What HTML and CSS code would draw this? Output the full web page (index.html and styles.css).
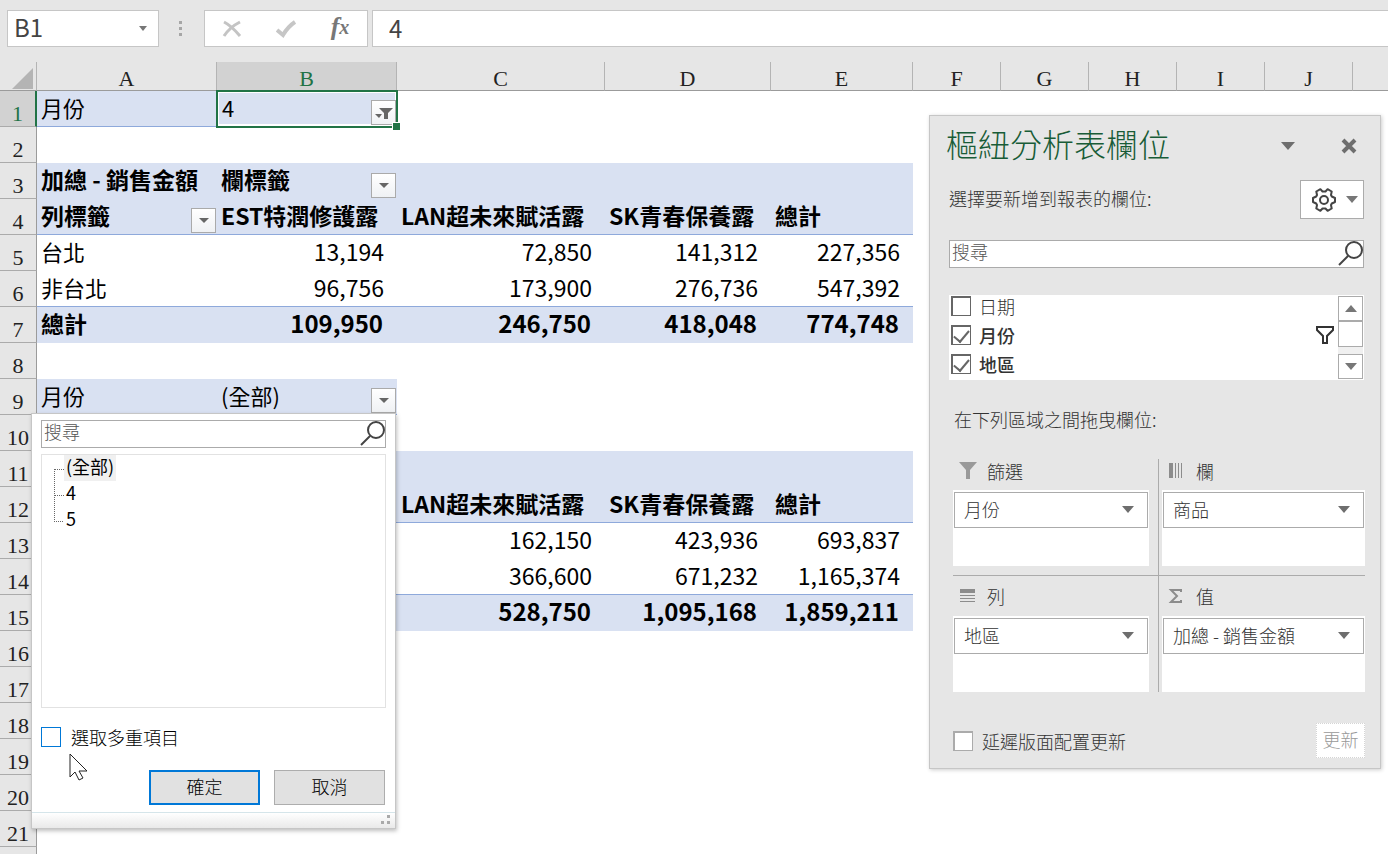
FILE: index.html
```html
<!DOCTYPE html>
<html lang="zh-Hant">
<head>
    <meta charset="UTF-8">
    <meta name="viewport" content="width=device-width, initial-scale=1.0">
    <title>樞紐分析表</title>
    <link rel="stylesheet" href="styles.css">
</head>
<body>
<header class="formula-bar">
    <div class="name-box">
        <input type="text" value="B1" aria-label="名稱方塊">
        <button type="button" aria-label="名稱清單"><svg width="8" height="5"><path d="M0 0h8L4 5z" fill="#777"/></svg></button>
    </div>
    <svg class="grip" width="3" height="16"><path d="M0 0h3v3H0zM0 6h3v3H0zM0 12h3v3H0z" fill="#a6a6a6"/></svg>
    <div class="formula-tools">
        <button type="button" aria-label="取消輸入"><svg width="20" height="20" viewBox="0 0 20 20"><path d="M2 3C8 6 13 11 18 17M18 3C12 6 6 11 2 17" fill="none" stroke="#c4c4c4" stroke-width="3"/></svg></button>
        <button type="button" aria-label="輸入"><svg width="20" height="20" viewBox="0 0 20 20"><path d="M1 11l6 5C10 11 13 7 19 3" fill="none" stroke="#c6c6c6" stroke-width="4"/></svg></button>
        <button type="button" class="fx" aria-label="插入函數"><span>f</span>x</button>
    </div>
    <input class="formula-input" type="text" value="4" aria-label="資料編輯列">
</header>

<main class="sheet">
    <table class="grid">
        <colgroup>
            <col class="col-head"><col class="col-a"><col class="col-a"><col class="col-c"><col class="col-d"><col class="col-e">
            <col class="col-f"><col class="col-f"><col class="col-f"><col class="col-f"><col class="col-f"><col>
        </colgroup>
        <thead>
            <tr>
                <th class="corner"><svg width="21" height="21"><path d="M21 0v21H0z" fill="#b4b4b4"/></svg></th>
                <th>A</th><th class="active">B</th><th>C</th><th>D</th><th>E</th><th>F</th><th>G</th><th>H</th><th>I</th><th>J</th><th></th>
            </tr>
        </thead>
        <tbody>
            <tr>
                <th class="active">1</th>
                <td class="fill line">月份</td>
                <td class="fill line selected">4<button type="button" class="drop" aria-label="篩選 月份"><svg width="18" height="12"><path d="M4 1h14l-5 5v6H9V6zM0 7h7l-3 4z" fill="#666"/></svg></button><span class="handle"></span></td>
            </tr>
            <tr><th>2</th></tr>
            <tr class="bold">
                <th>3</th>
                <td class="fill">加總 - 銷售金額</td>
                <td class="fill">欄標籤<button type="button" class="drop" aria-label="篩選 欄標籤"><svg width="10" height="5"><path d="M0 0h10L5 5z" fill="#666"/></svg></button></td>
                <td class="fill"></td><td class="fill"></td><td class="fill"></td>
            </tr>
            <tr class="bold">
                <th>4</th>
                <td class="fill line">列標籤<button type="button" class="drop" aria-label="篩選 列標籤"><svg width="10" height="5"><path d="M0 0h10L5 5z" fill="#666"/></svg></button></td>
                <td class="fill line">EST特潤修護露</td>
                <td class="fill line">LAN超未來賦活露</td>
                <td class="fill line">SK青春保養露</td>
                <td class="fill line">總計</td>
            </tr>
            <tr><th>5</th><td>台北</td><td class="num">13,194</td><td class="num">72,850</td><td class="num">141,312</td><td class="num">227,356</td></tr>
            <tr><th>6</th><td class="line">非台北</td><td class="num line">96,756</td><td class="num line">173,900</td><td class="num line">276,736</td><td class="num line">547,392</td></tr>
            <tr class="bold"><th>7</th><td class="fill">總計</td><td class="fill num">109,950</td><td class="fill num">246,750</td><td class="fill num">418,048</td><td class="fill num">774,748</td></tr>
            <tr><th>8</th></tr>
            <tr>
                <th>9</th>
                <td class="fill line">月份</td>
                <td class="fill line">(全部)<button type="button" class="drop" aria-label="篩選 月份"><svg width="10" height="5"><path d="M0 0h10L5 5z" fill="#666"/></svg></button></td>
            </tr>
            <tr><th>10</th></tr>
            <tr class="bold"><th>11</th><td class="fill"></td><td class="fill"></td><td class="fill"></td><td class="fill"></td><td class="fill"></td></tr>
            <tr class="bold"><th>12</th><td class="fill line"></td><td class="fill line"></td><td class="fill line">LAN超未來賦活露</td><td class="fill line">SK青春保養露</td><td class="fill line">總計</td></tr>
            <tr><th>13</th><td></td><td></td><td class="num">162,150</td><td class="num">423,936</td><td class="num">693,837</td></tr>
            <tr><th>14</th><td class="line"></td><td class="line"></td><td class="num line">366,600</td><td class="num line">671,232</td><td class="num line">1,165,374</td></tr>
            <tr class="bold"><th>15</th><td class="fill"></td><td class="fill"></td><td class="fill num">528,750</td><td class="fill num">1,095,168</td><td class="fill num">1,859,211</td></tr>
            <tr><th>16</th></tr>
            <tr><th>17</th></tr>
            <tr><th>18</th></tr>
            <tr><th>19</th></tr>
            <tr><th>20</th></tr>
            <tr><th>21</th></tr>
            <tr><th></th></tr>
        </tbody>
    </table>
</main>

<!-- Filter menu of the second report -->
<form class="filter-menu">
    <div class="search">
        <input type="text" placeholder="搜尋" aria-label="搜尋項目">
        <svg width="25" height="26" viewBox="0 0 25 26"><circle cx="16" cy="9" r="8" fill="none" stroke="#444" stroke-width="2"/><path d="M10 15L1 24" stroke="#444" stroke-width="2"/></svg>
    </div>
    <ul class="tree">
        <li><span class="current">(全部)</span></li>
        <li><span>4</span></li>
        <li><span>5</span></li>
    </ul>
    <label class="multi"><input type="checkbox">選取多重項目</label>
    <div class="actions">
        <button type="button" class="primary">確定</button>
        <button type="button">取消</button>
    </div>
    <div class="resize"><svg width="10" height="10"><path d="M6 0h3v3H6zM0 6h3v3H0zM6 6h3v3H6z" fill="#aaa"/></svg></div>
</form>
<svg class="pointer" width="19" height="29" viewBox="0 0 19 29"><path d="M1 1v23l5-5 4 8 4-2-4-7h8z" fill="#fff" stroke="#222"/></svg>

<!-- PivotTable fields pane -->
<aside class="pane">
    <div class="pane-title">
        <h1>樞紐分析表欄位</h1>
        <button type="button" aria-label="工作窗格選項"><svg width="14" height="8"><path d="M0 0h14L7 8z" fill="#6e6e6e"/></svg></button>
        <button type="button" aria-label="關閉"><svg width="16" height="16"><path d="M2 2l12 12M14 2L2 14" stroke="#6e6e6e" stroke-width="4"/></svg></button>
    </div>
    <div class="pane-prompt">
        <span>選擇要新增到報表的欄位:</span>
        <button type="button" class="gear" aria-label="工具">
            <svg width="26" height="24" viewBox="0 0 26 24"><path d="M24 10v4l-3.200 1.500-.8 1.500.7 3.500-4.100 2.300-2.100-2.300h-3l-2.100 2.300-4.100-2.300L6 17l-.8-1.500L2 14v-4l3.200-1.500L6 7l-.7-3.500 4.100-2.300 2.100 2.300h3l2.100-2.300 4.100 2.300L20 7l.8 1.500z" fill="none" stroke="#444" stroke-width="2" stroke-linejoin="round"/><circle cx="13" cy="12" r="4" fill="none" stroke="#444" stroke-width="2"/></svg>
            <svg width="12" height="7"><path d="M0 0h12L6 7z" fill="#777"/></svg>
        </button>
    </div>
    <div class="search">
        <input type="text" placeholder="搜尋" aria-label="搜尋欄位">
        <svg width="25" height="26" viewBox="0 0 25 26"><circle cx="16" cy="9" r="8" fill="none" stroke="#444" stroke-width="2"/><path d="M10 15L1 24" stroke="#444" stroke-width="2"/></svg>
    </div>
    <div class="fields">
        <div class="field-list">
            <label><input type="checkbox">日期</label>
            <label class="used"><input type="checkbox" checked>月份<svg width="20" height="20" viewBox="0 0 20 20"><path d="M2 2h16v3l-6 6v7H8v-7L2 5z" fill="none" stroke="#333" stroke-width="2"/></svg></label>
            <label class="used"><input type="checkbox" checked>地區</label>
        </div>
        <div class="scroll">
            <button type="button" aria-label="向上"><svg width="12" height="7"><path d="M0 7h12L6 0z" fill="#777"/></svg></button>
            <div class="thumb"></div>
            <button type="button" aria-label="向下"><svg width="12" height="7"><path d="M0 0h12L6 7z" fill="#777"/></svg></button>
        </div>
    </div>
    <p class="zones-label">在下列區域之間拖曳欄位:</p>
    <div class="zones">
        <section class="zone">
            <h2><svg width="20" height="18"><path d="M0 0h18l-7 8v9H7V8z" fill="#999"/></svg>篩選</h2>
            <div class="drop-box"><button type="button">月份<svg width="12" height="7"><path d="M0 0h12L6 7z" fill="#6e6e6e"/></svg></button></div>
        </section>
        <section class="zone">
            <h2><svg width="20" height="18"><path d="M1 1h4v15H1zM7 1h1v15H7zM10 1h1v15h-1zM13 1h1v15h-1z" fill="#8c8c8c"/></svg>欄</h2>
            <div class="drop-box"><button type="button">商品<svg width="12" height="7"><path d="M0 0h12L6 7z" fill="#6e6e6e"/></svg></button></div>
        </section>
        <section class="zone">
            <h2><svg width="20" height="18"><path d="M1 2h15v4H1zM1 8h15v1H1zM1 11h15v1H1zM1 14h15v1H1z" fill="#8c8c8c"/></svg>列</h2>
            <div class="drop-box"><button type="button">地區<svg width="12" height="7"><path d="M0 0h12L6 7z" fill="#6e6e6e"/></svg></button></div>
        </section>
        <section class="zone">
            <h2><svg width="20" height="18"><path d="M13 5V3H3l6 6-6 6h10v-2" fill="none" stroke="#8c8c8c" stroke-width="2"/></svg>值</h2>
            <div class="drop-box"><button type="button">加總 - 銷售金額<svg width="12" height="7"><path d="M0 0h12L6 7z" fill="#6e6e6e"/></svg></button></div>
        </section>
    </div>
    <div class="pane-footer">
        <label><input type="checkbox">延遲版面配置更新</label>
        <button type="button" disabled>更新</button>
    </div>
</aside>
</body>
</html>
```
FILE: styles.css
```css
* {
    box-sizing: border-box;
}
body {
    margin: 0;
    height: 100vh;
    overflow: hidden;
    position: relative;
    background: white;
    color: #000;
    font-family: "Noto Sans CJK TC", sans-serif;
    font-size: 18px;
    line-height: 26px;
}
button,
input {
    font: inherit;
    color: inherit;
    margin: 0;
    padding: 0;
}
button {
    display: flex;
    align-items: center;
    justify-content: center;
    border: none;
    background: none;
    cursor: pointer;
}
svg {
    display: block;
    flex: none;
}

/* formula bar */
.formula-bar {
    display: flex;
    align-items: center;
    height: 62px;
    padding: 10px 0 15px 7px;
    background: #e6e6e6;
    color: #444;
    font-size: 24px;
}
.name-box,
.formula-tools,
.formula-input {
    height: 37px;
    background: white;
    border: 1px solid #c6c6c6;
}
.name-box {
    display: flex;
    width: 152px;
}
.name-box input,
.formula-input {
    min-width: 0;
    padding-bottom: 3px;
}
.name-box input {
    flex: 1;
    padding-left: 6px;
    border: none;
}
.name-box button {
    width: 30px;
}
.grip {
    margin: 0 22px 0 20px;
}
.formula-tools {
    display: flex;
    width: 164px;
    margin-right: 4px;
}
.formula-tools button {
    flex: 1;
}
.formula-tools .fx {
    padding-bottom: 4px;
    font-family: "Liberation Serif", serif;
    font-style: italic;
    font-weight: bold;
    font-size: 20px;
    color: #777;
}
.fx span {
    font-size: 26px;
}
.formula-input {
    flex: 1;
    padding-left: 16px;
    border-right: none;
}

/* sheet */
.grid {
    width: 100%;
    table-layout: fixed;
    border-collapse: separate;
    border-spacing: 0;
    font-size: 22px;
    line-height: 30px;
}
.col-head { width: 37px; }
.col-a { width: 180px; }
.col-c { width: 208px; }
.col-d { width: 166px; }
.col-e { width: 142px; }
.col-f { width: 88px; }
.grid tr {
    height: 36px;
}
.grid th {
    padding: 0;
    background: #e6e6e6;
    color: #222;
    font-family: "Liberation Serif", serif;
    font-weight: normal;
    border-right: 1px solid #9b9b9b;
    border-bottom: 1px solid #ababab;
}
.grid thead tr {
    height: 29px;
}
.grid thead th {
    padding-top: 5px;
    line-height: 23px;
    border-right-color: #b4b4b4;
    border-bottom-color: #9b9b9b;
}
.grid thead th:last-child {
    border-right: none;
}
.grid tbody th {
    padding-top: 11px;
    line-height: 24px;
}
.grid thead .active,
.grid tbody .active {
    background: #d2d2d2;
    color: #217346;
}
.grid tbody .active {
    border-right: 2px solid #217346;
}
.corner svg {
    margin-left: 12px;
}
.grid td {
    position: relative;
    padding: 0 0 5px 4px;
    white-space: nowrap;
}
.grid .line {
    padding-bottom: 4px;
    border-bottom: 1px solid #8ea9db;
}
.grid .num {
    padding-left: 0;
    padding-right: 13px;
    font-size: 23px;
    text-align: right;
}
.fill {
    background: #d9e1f2;
}
.grid .bold td {
    font-size: 23px;
    font-weight: bold;
}
.grid .bold .num {
    padding-right: 14px;
    font-size: 24px;
}
.grid .selected {
    padding-left: 5px;
    outline: 2px solid #217346;
    outline-offset: -1px;
    box-shadow: inset 0 0 0 2px white;
    z-index: 1;
}
.drop {
    position: absolute;
    right: 1px;
    bottom: 1px;
    width: 25px;
    height: 25px;
    border: 1px solid #aaa;
    background: linear-gradient(white, #eff1f4);
}
.handle {
    position: absolute;
    right: -3px;
    bottom: -4px;
    width: 8px;
    height: 8px;
    background: #217346;
    border-top: 1px solid white;
    border-left: 1px solid white;
}

/* shared search box */
.search {
    display: flex;
    height: 28px;
    border: 1px solid #ababab;
    background: white;
}
.search input {
    flex: 1;
    min-width: 0;
    padding-left: 2px;
    padding-bottom: 6px;
    border: none;
    background: none;
    font-weight: 300;
}
.search input::placeholder {
    color: #555;
    opacity: 1;
}

/* check boxes */
input[type="checkbox"] {
    appearance: none;
    flex: none;
    width: 20px;
    height: 20px;
    border: 2px solid #666;
    border-width: 2px 1px 1px 2px;
    background: white;
}
input[type="checkbox"]:checked {
    display: grid;
    place-items: center;
}
input[type="checkbox"]:checked::after {
    content: "";
    width: 7px;
    height: 13px;
    margin-bottom: 4px;
    border: solid #666;
    border-width: 0 2px 2px 0;
    transform: rotate(40deg);
}

/* filter menu */
.filter-menu {
    position: absolute;
    left: 31px;
    top: 413px;
    width: 365px;
    padding: 6px 9px 0;
    background: white;
    border: 1px solid #c6c6c6;
    box-shadow: 1px 2px 4px rgba(0, 0, 0, 0.25);
    z-index: 2;
}
.tree {
    height: 254px;
    margin: 6px 0 19px;
    padding: 0 0 0 13px;
    border: 1px solid #e2e2e2;
    list-style: none;
}
.tree li {
    position: relative;
    height: 26px;
    padding-left: 9px;
}
.tree li::before {
    content: "";
    position: absolute;
    left: -1px;
    top: 14px;
    width: 9px;
    height: 26px;
    border-top: 1px dotted #666;
    border-left: 1px dotted #666;
}
.tree li:last-child::before {
    border-left: none;
}
.tree span {
    display: block;
    width: fit-content;
    height: 26px;
    padding: 0 2px;
    line-height: 22px;
}
.tree .current {
    background: #f0f0f0;
}
.multi {
    display: flex;
    align-items: center;
    gap: 10px;
    height: 20px;
    font-weight: 300;
}
.multi input[type="checkbox"] {
    border: 1px solid #0078d7;
}
.actions {
    display: flex;
    justify-content: flex-end;
    gap: 14px;
    margin: 23px 1px 7px;
}
.actions button {
    width: 111px;
    height: 35px;
    padding-bottom: 3px;
    background: #e1e1e1;
    border: 1px solid #adadad;
    font-weight: 300;
}
.actions .primary {
    border: 2px solid #0078d7;
}
.resize {
    display: flex;
    justify-content: flex-end;
    align-items: flex-end;
    height: 16px;
    margin: 0 -9px;
    padding: 0 4px 3px;
    border-top: 1px solid #d5e5ea;
    background: linear-gradient(white, #e9e9e9);
}
.pointer {
    position: absolute;
    left: 69px;
    top: 753px;
    z-index: 3;
}

/* fields pane */
.pane {
    position: absolute;
    top: 115px;
    right: 7px;
    width: 452px;
    padding: 12px 15px 10px 19px;
    background: #e6e6e6;
    border: 1px solid #c6c6c6;
    box-shadow: 1px 1px 4px rgba(0, 0, 0, 0.2);
    color: #333;
    font-weight: 300;
    z-index: 2;
}
.pane-title {
    display: flex;
    align-items: center;
    height: 36px;
    padding-right: 8px;
    gap: 46px;
}
.pane-title h1 {
    flex: 1;
    margin: 0 0 0 -3px;
    color: #185c37;
    font-size: 32px;
    font-weight: 300;
    line-height: 30px;
    height: 36px;
}
.pane-prompt {
    display: flex;
    justify-content: space-between;
    align-items: center;
    height: 39px;
    margin: 16px 1px 21px 0;
}
.pane-prompt span {
    padding-bottom: 3px;
}
.pane .search {
    margin-right: 1px;
}
.gear {
    gap: 9px;
    padding-left: 4px;
    width: 64px;
    height: 39px;
    background: white;
    border: 1px solid #ababab;
}
.fields {
    display: flex;
    height: 85px;
    margin: 27px 1px 0 0;
    padding: 1px;
    background: white;
}
.field-list {
    flex: 1;
}
.field-list label {
    display: flex;
    align-items: center;
    gap: 8px;
    height: 20px;
    margin: 0 3px 9px 1px;
    line-height: 20px;
}
.field-list .used {
    font-weight: 500;
}
.field-list svg {
    margin-left: auto;
}
.scroll {
    display: flex;
    flex-direction: column;
    width: 25px;
    background: #f0f0f0;
}
.scroll button {
    height: 25px;
    background: white;
    border: 1px solid #ababab;
}
.scroll .thumb {
    height: 26px;
    margin-bottom: auto;
    background: white;
    border: 1px solid #ababab;
}
.zones-label {
    margin: 26px 0 27px 5px;
}
.zones {
    display: grid;
    grid-template-columns: 206px 1fr;
    margin-left: 4px;
}
.zone:nth-child(odd) {
    padding-right: 9px;
    border-right: 1px solid #ababab;
}
.zone:nth-child(even) {
    padding-left: 3px;
}
.zone:nth-child(-n+2) {
    padding-bottom: 9px;
    border-bottom: 1px solid #ababab;
}
.zone h2 {
    display: flex;
    align-items: center;
    gap: 8px;
    height: 31px;
    margin: 0;
    padding: 0 0 8px 6px;
    font-size: 18px;
    font-weight: 300;
}
.zone:nth-child(n+3) h2 {
    height: 40px;
    padding-bottom: 0;
}
.drop-box {
    height: 76px;
    padding: 2px 1px;
    background: white;
}
.drop-box button {
    justify-content: space-between;
    width: 100%;
    height: 36px;
    padding: 0 13px 2px 9px;
    border: 1px solid #ababab;
    background: white;
}
.pane-footer {
    display: flex;
    justify-content: space-between;
    align-items: center;
    margin: 31px 0 0 4px;
}
.pane-footer label {
    display: flex;
    align-items: center;
    gap: 9px;
    line-height: 22px;
}
.pane-footer input[type="checkbox"] {
    border-color: #ababab;
}
.pane-footer button {
    width: 49px;
    height: 35px;
    padding-bottom: 3px;
    background: white;
    border: 1px dotted #d5d5d5;
    color: #999;
}
```
